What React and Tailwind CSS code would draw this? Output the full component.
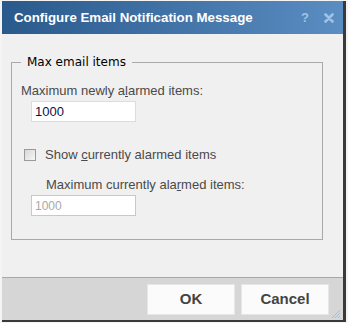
export default function App() {
  return (
    <div className="w-[348px] h-[323px] bg-[#f4f4f4] pt-px pl-[2px] font-['Liberation_Sans',Arial,sans-serif]">
      <div className="w-[344px] h-[321px] flex flex-col border-r-[3px] border-b-2 border-[#3a3a3a]">
        {/* title bar */}
        <div className="h-[33px] shrink-0 flex items-center pl-3 pr-[9px] bg-gradient-to-r from-[#2a5a8c] to-[#5a8dc2]">
          <span className="text-white font-bold text-[13.3px]">
            Configure Email Notification Message
          </span>
          <span className="ml-auto text-[#9fc3e6] font-bold text-[13px]">?</span>
          <svg className="ml-[15px]" width="10" height="10" viewBox="0 0 10 10">
            <path d="M1.5 1.5 L8.5 8.5 M8.5 1.5 L1.5 8.5" stroke="#9fc3e6" strokeWidth="2.6" strokeLinecap="round" />
          </svg>
        </div>

        {/* body */}
        <div className="flex-1 bg-[#f0f0f0] pt-[19px] pl-[9px] pr-[20px]">
          <fieldset className="border border-[#a9a9a9] h-[187px] pl-[9px] pr-2 pt-[12px] m-0">
            <legend className="ml-0 px-[6px] text-black text-[12px] font-['DejaVu_Sans',sans-serif]">
              Max email items
            </legend>
            <div className="text-[13px] text-[#4a4a4a] leading-[16px]">
              Maximum newly a<span className="underline">l</span>armed items:
            </div>
            <input
              defaultValue="1000"
              className="mt-[1px] ml-[10px] w-[105px] h-[21px] bg-white border border-[#dcdcdc] px-[3px] text-[13px] text-[#10104a] outline-none"
            />
            <label className="flex items-center mt-[22px] ml-[3px] text-[13px] text-[#4a4a4a]">
              <span className="w-[12px] h-[12px] border border-[#9a9a9a] bg-gradient-to-br from-[#d8d8d8] to-[#f6f6f6]" />
              <span className="ml-[9px]">
                Show <span className="underline">c</span>urrently alarmed items
              </span>
            </label>
            <div className="mt-[12px] ml-[25px] text-[13px] text-[#4a4a4a] leading-[16px]">
              Maximum currently ala<span className="underline">r</span>med items:
            </div>
            <input
              disabled
              defaultValue="1000"
              className="mt-[1px] ml-[10px] w-[105px] h-[21px] bg-white border border-[#c8c8c8] px-[3px] text-[12px] text-[#a8a8a8] outline-none"
            />
          </fieldset>
        </div>

        {/* footer */}
        <div className="h-[43px] shrink-0 relative flex items-center justify-end gap-[6px] pr-[14px] bg-[#d6d6d6] border-t border-[#a8a8a8]">
          <button className="w-[88px] h-[31px] bg-[#fbfbfb] border border-[#e6e6e6] text-[#444] font-bold text-[15px]">
            OK
          </button>
          <button className="w-[88px] h-[31px] bg-[#fbfbfb] border border-[#e6e6e6] text-[#444] font-bold text-[15px]">
            Cancel
          </button>
          <svg className="absolute right-[2px] bottom-[1px]" width="11" height="11" viewBox="0 0 11 11">
            <path d="M10 2 L2 10 M10 5 L5 10 M10 8 L8 10" stroke="#9ec0e0" strokeWidth="1" />
          </svg>
        </div>
      </div>
    </div>
  )
}
